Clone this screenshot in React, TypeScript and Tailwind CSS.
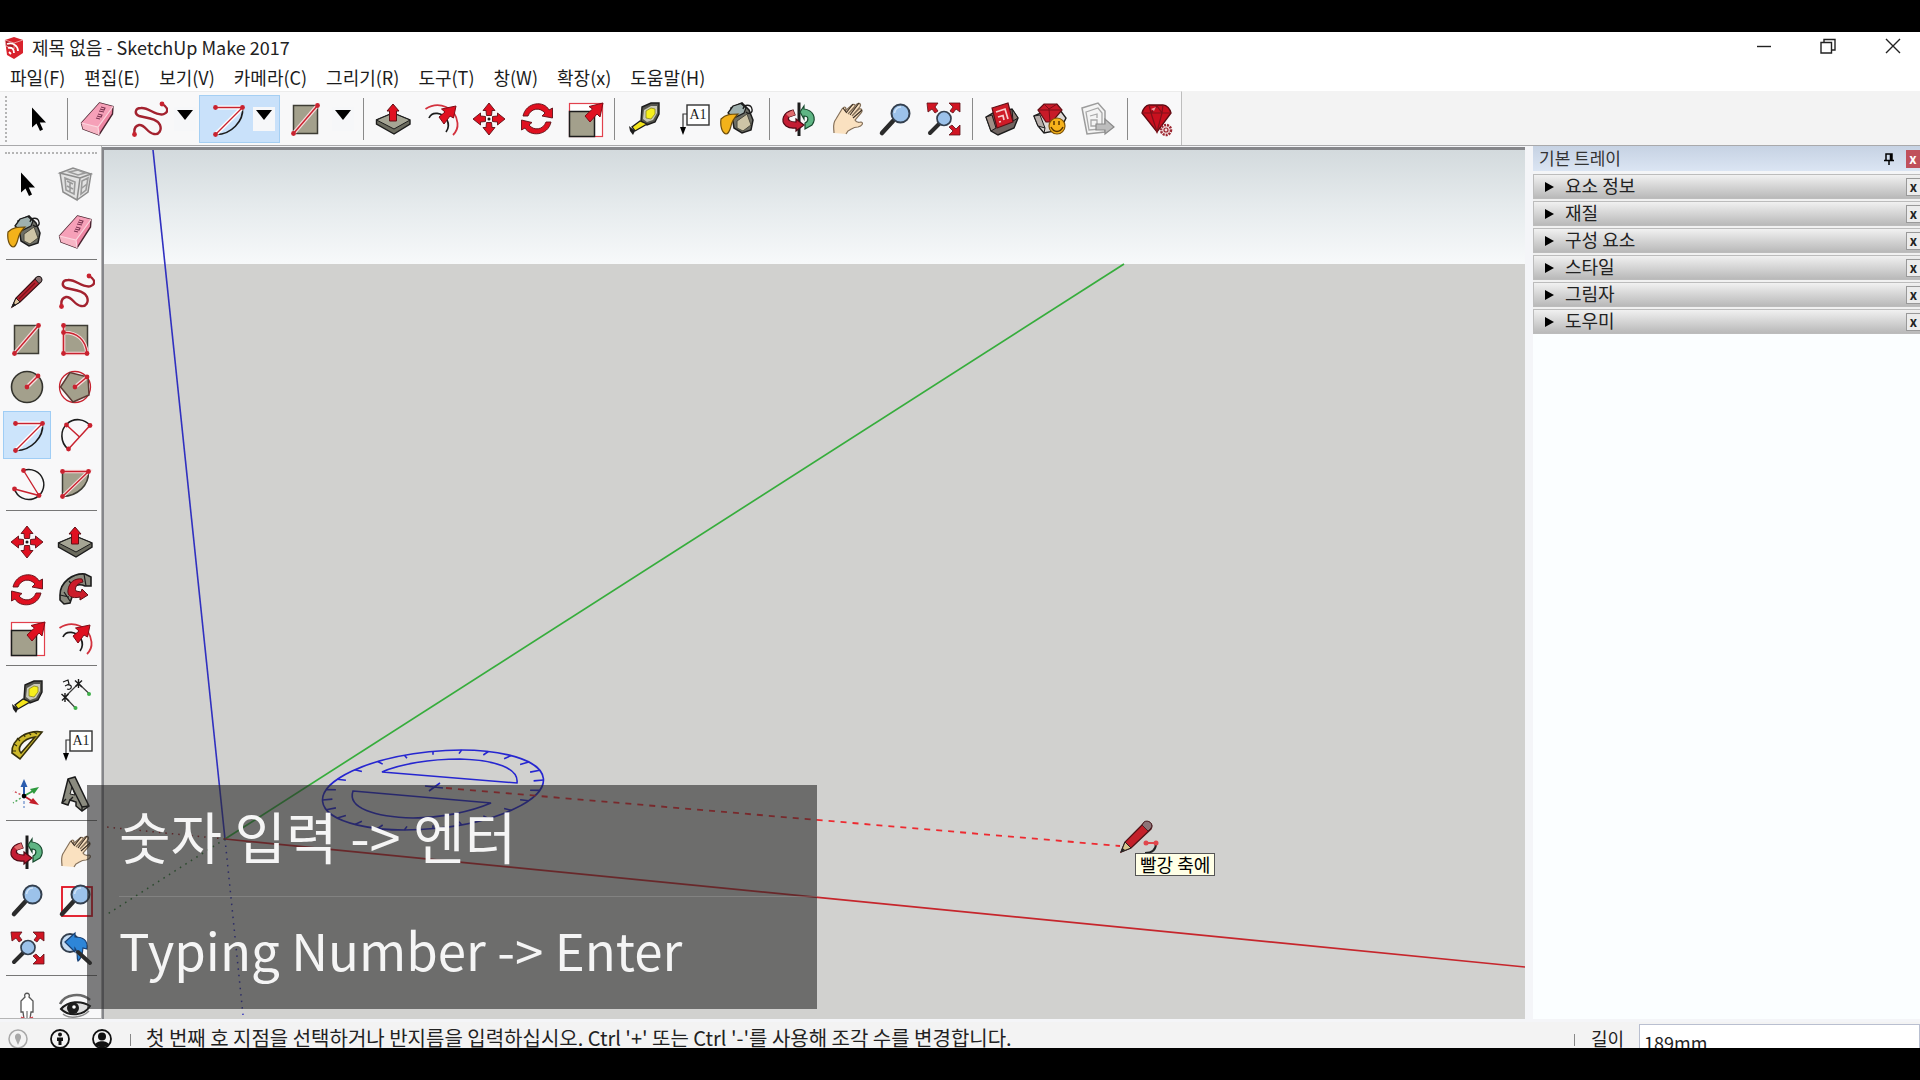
/**
 * SketchUp window: menu, large tool set, 3D viewport and default tray,
 * with the lesson caption laid over the lower left corner.
 */

import type { ReactNode } from "react";

/* ── Icon base (40 × 40 grid) ─────────────────────────── */
function Icon({ children }: { children: ReactNode }) {
    return (
        <svg viewBox="0 0 40 40" className="h-10 w-10 shrink-0" fill="none" aria-hidden="true">
            {children}
        </svg>
    );
}

const RED = "#e01020";
const ROSE = "#c8222f";
const INK = "#1c1c1c";
const CLAY = "#a3a08c";

function Dots({ at }: { at: [number, number][] }) {
    return (
        <>
            {at.map(([x, y]) => (
                <circle key={`${x}-${y}`} cx={x} cy={y} r="2.4" fill={ROSE} />
            ))}
        </>
    );
}

const SelectIcon = () => (
    <Icon>
        <path d="M14 8.500V28.500L18.500 24.500L22 32L25 30.500L21.800 23.500H28Z" fill="#000" />
    </Icon>
);

const ComponentIcon = () => (
    <Icon>
        <path d="M5 9L18 4L36 10L25 14ZM5 9L8 28L22 36L25 14ZM25 14L36 10L33 28L22 36" fill="#e2e2e2" stroke="#8d8d8d" strokeWidth="1.500" />
        <path d="M10 14L20 18L19 30L11 26ZM12 17l6 3M12 22l6 3M15 18v10M27 17l6-3l-2 12l-5 4zM27 24l5-4M14 8l9-2l7 3l-7 2z" stroke="#9b9b9b" strokeWidth="1.600" />
    </Icon>
);

const PaintIcon = () => (
    <Icon>
        <path d="M11 9L22 4L29 11L33 21L31 31L22 34L14 29Z" fill="#6d6e66" stroke={INK} strokeWidth="1.500" />
        <path d="M17 22L27 15L31 26L23 32L17 29Z" fill="#cdc4a6" stroke="#4a483c" />
        <path d="M8 14L13 7L21 4.500L26 9L24 14L14 19Z" fill="#9fb0ae" stroke={INK} strokeWidth="1.300" />
        <path d="M23 10C24 5 31 5 32 10C33 14 29 16 26 13" stroke={INK} strokeWidth="1.300" />
        <path d="M1 20C6 15 11 15 18 15C14 19 12 22 11 27C10 31 8 35 6 35C2 34 0 27 1 20Z" fill="#f3b21a" stroke="#6d4d0c" strokeWidth="1.200" />
    </Icon>
);

const EraserIcon = () => (
    <Icon>
        <path d="M22.500 4L36 7.500L35.500 15L22 36L6 30L4.500 24Z" fill="#ee86a3" stroke="#4a2430" strokeWidth="1.400" />
        <path d="M4.500 24L21 28L36 7.500L22.500 4Z" fill="#f6a0b8" />
        <path d="M4.500 24L21 28L22 36L6 30Z" fill="#f7b6c5" />
        <path d="M4.500 24L21 28L36 7.500M21 28L22 36" stroke="#fbd5de" strokeWidth="1.200" />
        <path d="M24 8l4 1l-1 2l-4-1M22 12l5 1M21 15l4 1l-1 2l-4-1M19 19l4 1" stroke="#7a3350" strokeWidth="1.100" />
    </Icon>
);

const PencilIcon = () => (
    <Icon>
        <path d="M5 36L9 27L29 7C32 4 36 7 34 11L13 31Z" fill="#b7232f" stroke="#3c1216" strokeWidth="1.200" />
        <path d="M5 36L9 27L13 31Z" fill="#e2c7a0" stroke={INK} strokeWidth="1" />
        <path d="M5 36L6.500 31.500L9 34Z" fill={INK} />
        <path d="M28 8L32 12.500L34.500 10.500C36 7 33 4 29.500 6Z" fill="#8a7070" stroke={INK} />
        <path d="M12 28L28 12" stroke="#7c0f1a" strokeWidth="1.300" />
    </Icon>
);

const FreehandIcon = () => (
    <Icon>
        <path
            d="M34 5C40 8 41 13 36 15C28 18 21 8 13 9C7 9 6 15 11 17C18 19 29 19 32 26C34 31 31 36 26 35C19 34 17 25 11 26C6 27 6 31 6.500 35"
            stroke="#a3222f"
            strokeWidth="2.400"
        />
        <Dots at={[[34, 5], [6.5, 35.5]]} />
    </Icon>
);

const RectIcon = () => (
    <Icon>
        <rect x="7.500" y="6.500" width="24" height="28" fill={CLAY} stroke="#3d3c34" strokeWidth="1.500" />
        <path d="M7.500 34.500L31.500 6.500" stroke="#f7dcdc" strokeWidth="4" />
        <path d="M7.500 34.500L31.500 6.500" stroke={ROSE} strokeWidth="1.500" />
        <Dots at={[[7.5, 34.5], [31.5, 6.5]]} />
    </Icon>
);

const RotatedRectIcon = () => (
    <Icon>
        <rect x="8.500" y="6.500" width="24" height="28" fill={CLAY} stroke="#3d3c34" strokeWidth="1.500" />
        <path d="M8.500 13.500C22 13 31 21 32 34.500H8.500V6.500" stroke="#f7dcdc" strokeWidth="3.600" />
        <path d="M8.500 13.500C22 13 31 21 32 34.500H8.500V6.500" stroke={ROSE} strokeWidth="1.500" />
        <Dots at={[[8.5, 6.5], [8.5, 13.5], [8.5, 34.5], [32, 34.5]]} />
    </Icon>
);

const CircleIcon = () => (
    <Icon>
        <circle cx="20" cy="20" r="15.500" fill={CLAY} stroke="#33332d" strokeWidth="1.600" />
        <path d="M20 20L31 9" stroke="#f7dcdc" strokeWidth="4" />
        <path d="M20 20L31 9" stroke={ROSE} strokeWidth="1.500" />
        <Dots at={[[20, 20], [31, 9]]} />
    </Icon>
);

const PolygonIcon = () => (
    <Icon>
        <circle cx="20" cy="20" r="15.500" stroke={ROSE} strokeWidth="1.300" />
        <path d="M33 10L34 28L18 35L5.500 20L15 5.500Z" fill={CLAY} stroke="#5b3a34" strokeWidth="1.500" />
        <path d="M20 20L32 10" stroke="#f7dcdc" strokeWidth="4" />
        <path d="M20 20L32 10" stroke={ROSE} strokeWidth="1.500" />
        <Dots at={[[20, 20], [32, 10]]} />
    </Icon>
);

const ArcIcon = () => (
    <Icon>
        <path d="M35.500 8.500C37 22 24 36 8.500 35.500" stroke={INK} strokeWidth="1.600" />
        <path d="M8.500 8.500H35.500L8.500 35.500" stroke="#fff" strokeWidth="4" strokeLinejoin="round" />
        <path d="M8.500 8.500H35.500L8.500 35.500" stroke={ROSE} strokeWidth="1.400" />
        <Dots at={[[8.5, 8.5], [35.5, 8.5], [8.5, 35.5]]} />
    </Icon>
);

const CenterArcIcon = () => (
    <Icon>
        <path d="M35 10.500C30 4 19 2 12 9C5 15 5 27 13 34" stroke={INK} strokeWidth="1.600" />
        <path d="M11.500 10L24 21.500M35 10.500L13.500 34" stroke={ROSE} strokeWidth="1.500" />
        <Dots at={[[11.5, 10], [35, 10.5], [13.5, 34]]} />
    </Icon>
);

const ThreePointArcIcon = () => (
    <Icon>
        <path d="M16.500 7.500A15 15 0 1 1 7.500 26" stroke={INK} strokeWidth="1.500" />
        <path d="M16.500 7.500L32 32.500L7.500 26" stroke={ROSE} strokeWidth="1.400" />
        <Dots at={[[16.5, 7.5], [32, 32.5], [7.5, 26]]} />
    </Icon>
);

const PieIcon = () => (
    <Icon>
        <path d="M7.500 8.500H33.500C34 22 23 33 7.500 33.500Z" fill={CLAY} stroke="#3d3c34" strokeWidth="1.500" />
        <path d="M7.500 8.500H33.500L7.500 33.500" stroke="#f7dcdc" strokeWidth="3.600" />
        <path d="M7.500 8.500H33.500L7.500 33.500" stroke={ROSE} strokeWidth="1.400" />
        <Dots at={[[7.5, 8.5], [33.5, 8.5], [7.5, 33.5]]} />
    </Icon>
);

const MoveIcon = () => (
    <Icon>
        <g fill={RED} stroke="#5e1016" strokeWidth="0.900">
            {[0, 90, 180, 270].map((turn) => (
                <path key={turn} transform={`rotate(${turn} 20 20)`} d="M20 4L26 11.500H23L22.500 16.500H17.500L17 11.500H14Z" />
            ))}
        </g>
        <circle cx="20" cy="20" r="1.500" fill={INK} />
    </Icon>
);

const PushPullIcon = () => (
    <Icon>
        <path d="M3.500 21L20 14L37 21V25L21 35L3.500 25Z" fill="#6b6b5e" stroke={INK} strokeWidth="1.400" />
        <path d="M3.500 21L20 14L37 21L21 30Z" fill="#a5a594" stroke={INK} strokeWidth="1" />
        <path d="M20 5L26 12H23.500V22H16.500V12H14Z" fill={RED} stroke="#5e1016" strokeWidth="1" />
    </Icon>
);

const RotateIcon = () => (
    <Icon>
        <path d="M6 17C9 3 27 1 32 11L35.500 9V19L25 17L28 14C23 8 14 9 11 17Z" fill={RED} stroke="#5e1016" strokeWidth="0.900" />
        <path d="M34 23C31 37 13 38 8 29L4.500 31V21L15 23.500L12 26C17 32 26 31 29 23Z" fill={RED} stroke="#5e1016" strokeWidth="0.900" />
    </Icon>
);

const FollowMeIcon = () => (
    <Icon>
        <path d="M5 25C5 12 18 3 30 4L36 7V16L30 16C21 12 14 19 17 27L15 33L9 34L5 30Z" fill="#8b8b7f" stroke={INK} strokeWidth="1.600" />
        <path d="M9 22L15 31M5 25L14 27M29 4L31 16M14 11L19 17" stroke={INK} strokeWidth="1.200" />
        <path d="M13 20C14 12 20 8 27 9L28 12C23 13 19 17 21 21L26 22L27 19L33 25L25 30L25 27C17 29 12 26 13 20Z" fill="#cb1c2a" stroke="#5e1016" strokeWidth="1" />
    </Icon>
);

const ScaleIcon = () => (
    <Icon>
        <rect x="4.500" y="4.500" width="33" height="33" fill="#fff" stroke="#e2414d" strokeWidth="1.200" />
        <rect x="4.500" y="12.500" width="25" height="25" fill={CLAY} stroke={INK} strokeWidth="1.500" />
        <path d="M38 4L35 18L32 15L25 23L20 17L27.500 10L24 7.500Z" fill={RED} stroke="#7d0c16" strokeWidth="1" />
    </Icon>
);

const OffsetIcon = () => (
    <Icon>
        <path d="M4.500 10C18 1 35 9 36.500 24C37 29 35 33 32 36" stroke="#d3323e" strokeWidth="1.800" />
        <path d="M8 19C11 12 21 13 26 21C28 25 28 29 25 33" stroke={INK} strokeWidth="1.700" />
        <path d="M35 7L32.500 19L29 17L23 25L18 18L24 13L20.500 10Z" fill={RED} stroke="#7d0c16" strokeWidth="1" />
    </Icon>
);

const TapeIcon = () => (
    <Icon>
        <path d="M18 8L27 4H35V15L31 23L23 26L17 22Z" fill="#55554e" stroke={INK} strokeWidth="1.400" />
        <path d="M20 11L27 7H33V14L29 21L23 23L19 20Z" fill="#c9c8b8" />
        <path d="M22 12L27 9L31 10V15L27 20L22 19Z" fill="#f7f01c" stroke="#8a8620" strokeWidth="0.800" />
        <path d="M16 22L23 25L11 32L8 28Z" fill="#f3e41c" stroke={INK} strokeWidth="1.300" />
        <path d="M5 27L11 32L9 36L6 32Z" fill={INK} />
    </Icon>
);

const DimensionIcon = () => (
    <Icon>
        <path d="M10 20L23.500 6.500M10 20L20 30.500M23.500 6.500L34 16.500" stroke="#3c3c3c" strokeWidth="1.200" />
        <path d="M6.500 17L14 24M7 23.500L13.500 17M20 3.500L27 10M20.500 9.500L27 3.500M10 16v9M23.500 2v9" stroke={INK} strokeWidth="1.400" />
        <path d="M8 5l5-2l1 4l-4 2M13 8c5-1 4 6-1 4" stroke={INK} strokeWidth="1.200" />
        <circle cx="20.500" cy="31" r="2" fill="#3fb04a" />
        <circle cx="34" cy="17" r="2" fill="#3fb04a" />
    </Icon>
);

const ProtractorIcon = () => (
    <Icon>
        <path d="M35 7C22 5 4 13 5 28L13 34Z M28 12L14 28C10 24 14 14 28 12Z" fillRule="evenodd" fill="#cdb92b" stroke="#37310c" strokeWidth="1.600" />
        <path d="M30 9L27 7M24 10L22 8M18 12L17 9M13 16L10 13M10 21L7 19M9 26H5" stroke="#37310c" strokeWidth="1.200" />
    </Icon>
);

const TextIcon = () => (
    <Icon>
        <rect x="15" y="6" width="22" height="20" fill="#fff" stroke="#333" strokeWidth="1.400" />
        <path d="M15 15H11V28" stroke="#333" strokeWidth="1.200" />
        <path d="M8 28H14L11 36Z" fill="#000" />
        <text x="26" y="20" textAnchor="middle" fontSize="14" fill={INK} className="font-['Liberation_Serif',serif]">
            A1
        </text>
    </Icon>
);

const AxesIcon = () => (
    <Icon>
        <path d="M17 23L6 18" stroke="#d04550" strokeWidth="1.400" strokeDasharray="2 2" />
        <path d="M17 23L6 30" stroke="#4ba656" strokeWidth="1.400" strokeDasharray="2 2" />
        <path d="M17 23V35" stroke="#7b9bd1" strokeWidth="1.400" strokeDasharray="3 2" />
        <path d="M17 23V11" stroke="#2b5cae" strokeWidth="2" />
        <path d="M17 23L26 18" stroke="#2e9a3e" strokeWidth="1.800" />
        <path d="M17 23L25 28" stroke="#c41e2a" strokeWidth="1.800" />
        <path d="M17 6L20.500 14H13.500Z" fill="#2b5cae" />
        <path d="M32 14L27 21L23 16Z" fill="#2e9a3e" />
        <path d="M32 32L22 30L26 25Z" fill="#c41e2a" />
        <circle cx="17" cy="23" r="2.300" fill="#000" />
    </Icon>
);

const Text3dIcon = () => (
    <Icon>
        <path d="M13 6L20 4L34 33L27 38L21 33L21 29L15 27L13 32L7 30Z" fill="#8b8b7f" stroke={INK} strokeWidth="1.500" />
        <path d="M17 14L20 22L15 21Z" fill="#f0f0ee" stroke={INK} />
        <path d="M13 6L27 34V38M7 30L11 26M27 34L34 33M15 27L18 24" stroke={INK} strokeWidth="1.400" />
    </Icon>
);

const OrbitIcon = () => (
    <Icon>
        <path d="M20 3.500V37" stroke={INK} strokeWidth="3" />
        <path d="M21 13L25 7V10C34 11 38 19 33 26L26 30V24C30 22 30 17 25 17V20Z" fill="#5fb584" stroke="#17492d" strokeWidth="1.200" />
        <path d="M14 11C4 13 1 22 7 27C11 30 15 29 17 29V32L25 26L17 20V23C11 23 8 21 10 18L16 16Z" fill="#c31c33" stroke="#4d0914" strokeWidth="1.200" />
        <path d="M14 11L16 16L10 18L7 15Z" fill="#e06c6e" />
    </Icon>
);

const HandIcon = () => (
    <Icon>
        <path d="M7 34C7 29 5 25 9 20L15 10C18 6 20 9 18 12L25 6C28 4 29 7 27 9L21 15L30 5C33 3 35 6 32 9L25 17L32 10C35 9 36 12 34 14L28 21C29 23 31 24 34 23C37 24 35 27 31 28C26 28 25 30 21 32L19 35" fill="#fae1c0" stroke="#85715b" strokeWidth="1.200" />
        <path d="M16 9L19 13M26 5L19 14M32 4L23 16M35 11L26 19" stroke="#3b2f25" strokeWidth="1.200" />
    </Icon>
);

const Lens = ({ window = false }: { window?: boolean }) => (
    <Icon>
        {window && <rect x="7" y="7" width="30" height="29" stroke={RED} strokeWidth="1.800" />}
        <path d="M18 22L7 34" stroke="#2b2b2b" strokeWidth="4.500" strokeLinecap="round" />
        <circle cx="25.500" cy="14.500" r="9" fill="#9cc2ea" stroke="#34404f" strokeWidth="2" />
        <path d="M19.500 14C20 10 23 8 26 8" stroke="#d3e5f8" strokeWidth="1.600" />
    </Icon>
);

const ExtentsIcon = () => (
    <Icon>
        <path d="M17 24L7 34" stroke="#2b2b2b" strokeWidth="4" strokeLinecap="round" />
        <circle cx="21" cy="19.500" r="7" fill="#9cc2ea" stroke="#34404f" strokeWidth="1.700" />
        <g fill="#d11523" stroke="#5e1016" strokeWidth="0.800">
            <path d="M4 4L15 4L12 8L15 12L12 14L9 10L5 13Z" />
            <path d="M37 4L26 4L30 8L27 12L30 14L33 10L37 13Z" />
            <path d="M37 36L26 36L30 32L26 28L29 26L33 30L37 26Z" />
        </g>
    </Icon>
);

const PreviousIcon = () => (
    <Icon>
        <circle cx="15" cy="15" r="9" fill="#c6dcf2" stroke="#34404f" strokeWidth="2" />
        <path d="M10 14L20 5V9C28 9 33 12 32 21L28 20C27 25 28 29 23 33C21 29 24 25 20 20V24Z" fill="#2e86d8" stroke="#173f73" strokeWidth="1.200" />
        <path d="M23 24L35 35" stroke="#2b2b2b" strokeWidth="4" strokeLinecap="round" />
    </Icon>
);

const PersonIcon = () => (
    <Icon>
        <path d="M18 10C16 5 24 5 22 10L26 14L26 25H24L23 32H17L16 25H14V14Z" fill="#fff" stroke="#555" strokeWidth="1.300" />
        <path d="M20 24V32" stroke="#555" />
        <path d="M14 30l3 2M17 30l-3 2M23 30l3 2M26 30l-3 2" stroke="#d04550" strokeWidth="1.200" />
    </Icon>
);

const EyeIcon = () => (
    <Icon>
        <path d="M5 17C10 7 26 5 35 13" stroke="#6a6a6a" strokeWidth="2.600" />
        <path d="M6 22C13 14 26 13 35 19C29 29 14 30 6 22Z" fill="#dedede" stroke={INK} strokeWidth="2" />
        <circle cx="18" cy="21" r="6" fill={INK} />
        <circle cx="19" cy="20" r="1.800" fill="#fff" />
        <path d="M8 27C14 32 27 31 34 24" stroke="#8b8b8b" strokeWidth="1.500" />
    </Icon>
);

const WarehouseIcon = () => (
    <Icon>
        <path d="M4 18L11 14L30 10L36 19L32 29L16 36L9 32Z" fill="#6f6460" stroke={INK} strokeWidth="1.400" />
        <path d="M4 18L10 16L14 29L9 32Z" fill="#a08e86" stroke={INK} />
        <path d="M30 10L36 19L31 22Z" fill="#8d7b74" stroke={INK} />
        <path d="M10 9L26 4L31 23L15 29Z" fill="#cf1b27" stroke="#5e1016" strokeWidth="1.200" />
        <path d="M14 13L23 10L26 20M16 18L21 16.500L22 21M17 23L19 22.500" stroke="#f7d0d0" strokeWidth="1.700" />
    </Icon>
);

const ExtensionIcon = () => (
    <Icon>
        <path d="M4 17L11 14L30 11L36 19L30 31L14 34L8 27Z" fill="#ddd8d5" stroke={INK} strokeWidth="1.400" />
        <path d="M4 17L10 16L15 29L8 27ZM15 29L14 34" fill="#b7aeaa" stroke={INK} />
        <path d="M8 11L14 5H27L32 11L22 23H16Z" fill="#c81a28" stroke="#5e1016" strokeWidth="1.200" />
        <path d="M8 11H32M14 5L19 10L27 5M19 10L20 23" stroke="#7d0c16" />
        <circle cx="27" cy="27" r="8" fill="#f6b21b" stroke="#7b5106" strokeWidth="1.200" />
        <path d="M24 22v4M29 22v4M21 28C24 34 30 34 33 28" stroke="#5a3600" strokeWidth="1.500" />
    </Icon>
);

const LayoutIcon = () => (
    <Icon>
        <path d="M4 9L20 4L27 12V33L9 35Z" fill="#f4f4f4" stroke="#9c9c9c" strokeWidth="1.500" />
        <path d="M8 13L20 9L24 14V30L11 31ZM12 17L19 15V19M13 21h6v6h-6z" stroke="#a8a8a8" strokeWidth="1.300" />
        <path d="M18 25H27V20L36 28L27 35V31H18Z" fill="#bdbdbd" stroke="#8a8a8a" strokeWidth="1.200" />
    </Icon>
);

const RubyIcon = () => (
    <Icon>
        <path d="M5 14C6 10 9 6 12 6H26C30 6 33 10 34 14L20 33Z" fill="#c9101f" stroke="#5e0a12" strokeWidth="1.300" />
        <path d="M5 14H34M12 6L14 14L20 33L25 14L26 6M14 14L20 7L25 14" stroke="#81101a" strokeWidth="1.200" />
        <path d="M14 10L19 8L17 12Z" fill="#f19aa0" />
        <circle cx="29" cy="31" r="5" fill="#f2dede" stroke="#9c2631" strokeWidth="2.500" strokeDasharray="2 1" />
        <circle cx="29" cy="31" r="2" stroke="#9c2631" strokeWidth="1.200" />
    </Icon>
);

/* ── Tool lists ───────────────────────────────────────── */
interface Tool {
    name: string;
    icon: () => ReactNode;
}

const ZoomIcon = () => <Lens />;
const ZoomWindowIcon = () => <Lens window />;

const topGroups: Tool[][] = [
    [
        { name: "밀기/끌기", icon: PushPullIcon },
        { name: "오프셋", icon: OffsetIcon },
        { name: "이동", icon: MoveIcon },
        { name: "회전", icon: RotateIcon },
        { name: "배율", icon: ScaleIcon },
    ],
    [
        { name: "줄자", icon: TapeIcon },
        { name: "텍스트", icon: TextIcon },
        { name: "페인트", icon: PaintIcon },
    ],
    [
        { name: "궤도", icon: OrbitIcon },
        { name: "이동 보기", icon: HandIcon },
        { name: "확대/축소", icon: ZoomIcon },
        { name: "범위 확대", icon: ExtentsIcon },
    ],
    [
        { name: "3D 웨어하우스", icon: WarehouseIcon },
        { name: "확장 웨어하우스", icon: ExtensionIcon },
        { name: "레이아웃", icon: LayoutIcon },
    ],
    [{ name: "확장 관리자", icon: RubyIcon }],
];

const sideGroups: Tool[][] = [
    [
        { name: "선택", icon: SelectIcon },
        { name: "구성 요소 만들기", icon: ComponentIcon },
        { name: "페인트", icon: PaintIcon },
        { name: "지우개", icon: EraserIcon },
    ],
    [
        { name: "선", icon: PencilIcon },
        { name: "자유곡선", icon: FreehandIcon },
        { name: "직사각형", icon: RectIcon },
        { name: "회전된 직사각형", icon: RotatedRectIcon },
        { name: "원", icon: CircleIcon },
        { name: "다각형", icon: PolygonIcon },
        { name: "2점 호", icon: ArcIcon },
        { name: "호", icon: CenterArcIcon },
        { name: "3점 호", icon: ThreePointArcIcon },
        { name: "파이", icon: PieIcon },
    ],
    [
        { name: "이동", icon: MoveIcon },
        { name: "밀기/끌기", icon: PushPullIcon },
        { name: "회전", icon: RotateIcon },
        { name: "따라가기", icon: FollowMeIcon },
        { name: "배율", icon: ScaleIcon },
        { name: "오프셋", icon: OffsetIcon },
    ],
    [
        { name: "줄자", icon: TapeIcon },
        { name: "치수", icon: DimensionIcon },
        { name: "각도기", icon: ProtractorIcon },
        { name: "텍스트", icon: TextIcon },
        { name: "축", icon: AxesIcon },
        { name: "3D 텍스트", icon: Text3dIcon },
    ],
    [
        { name: "궤도", icon: OrbitIcon },
        { name: "이동 보기", icon: HandIcon },
        { name: "확대/축소", icon: ZoomIcon },
        { name: "창 확대", icon: ZoomWindowIcon },
        { name: "범위 확대", icon: ExtentsIcon },
        { name: "이전", icon: PreviousIcon },
    ],
    [
        { name: "카메라 배치", icon: PersonIcon },
        { name: "둘러보기", icon: EyeIcon },
    ],
];

const menus = ["파일(F)", "편집(E)", "보기(V)", "카메라(C)", "그리기(R)", "도구(T)", "창(W)", "확장(x)", "도움말(H)"];
const panels = ["요소 정보", "재질", "구성 요소", "스타일", "그림자", "도우미"];

function ToolButton({ tool, active = false }: { tool: Tool; active?: boolean }) {
    const Glyph = tool.icon;
    return (
        <button
            type="button"
            aria-label={tool.name}
            className={`flex h-12 w-12 shrink-0 items-center justify-center ${active ? "border border-[#9fcdf5] bg-[#cce4fb]" : ""}`}
        >
            <Glyph />
        </button>
    );
}

function SplitButton({ tool, active = false }: { tool: Tool; active?: boolean }) {
    const Glyph = tool.icon;
    return (
        <div className={`flex h-[46px] w-[79px] shrink-0 items-center pr-1 ${active ? "bg-[#c9e1fa] outline outline-[#a5cff3]" : ""}`}>
            <button type="button" aria-label={tool.name} className="flex flex-1 items-center justify-center">
                <Glyph />
            </button>
            <button type="button" aria-label={`${tool.name} 더 보기`} className="flex h-6 w-[22px] items-start justify-center bg-[#f6f7f9] pt-[3px]">
                <svg viewBox="0 0 16 10" className="h-[10px] w-4" aria-hidden="true">
                    <path d="M0 0H16L8 10Z" fill="#000" />
                </svg>
            </button>
        </div>
    );
}

const BarRule = () => <div className="mr-[5px] ml-[5px] h-[42px] w-px shrink-0 bg-[#8a8a8a]" />;

/* ── Top bars ─────────────────────────────────────────── */
function TitleBar() {
    return (
        <div className="flex h-8 items-center bg-white pl-1">
            <svg viewBox="0 0 20 22" className="h-[22px] w-5" aria-hidden="true">
                <path d="M1 3L10 0L19 3V16L10 22L3 18Z" fill="#d9222c" />
                <path d="M1 3L10 6V12L2 9ZM10 6L19 3" fill="#b3141e" stroke="#f4c6c8" strokeWidth="0.700" />
                <path d="M3 7C9 5 14 9 14 14M4 11C8 10 10 12 10 16M5 15L7 17" fill="none" stroke="#fff" strokeWidth="1.800" />
            </svg>
            <h1 className="ml-2 flex-1 pb-[2px] text-[18px] leading-7">제목 없음 - SketchUp Make 2017</h1>
            <div className="flex h-full items-start">
                <button type="button" aria-label="최소화" className="flex h-7 w-16 items-center justify-center">
                    <svg viewBox="0 0 16 16" className="h-4 w-4" stroke="#222" strokeWidth="1.400"><path d="M1 8.500H15" /></svg>
                </button>
                <button type="button" aria-label="이전 크기로" className="flex h-7 w-16 items-center justify-center">
                    <svg viewBox="0 0 16 16" className="h-4 w-4" fill="none" stroke="#222" strokeWidth="1.400"><path d="M1 4.500H11.500V15H1ZM4 4V1.500H15V12H12" /></svg>
                </button>
                <button type="button" aria-label="닫기" className="ml-[6px] flex h-7 w-[54px] items-center justify-center">
                    <svg viewBox="0 0 16 16" className="h-4 w-4" stroke="#222" strokeWidth="1.400"><path d="M1 1L15 15M15 1L1 15" /></svg>
                </button>
            </div>
        </div>
    );
}

function MenuBar() {
    return (
        <nav className="flex h-[27px] items-center gap-[19px] bg-white pb-[2px] pl-[10px]">
            {menus.map((label) => (
                <button key={label} type="button" className="text-[18px] leading-6 whitespace-nowrap text-[#1c1c1c]">
                    {label}
                </button>
            ))}
        </nav>
    );
}

function TopToolbar() {
    return (
        <div className="flex h-[55px] border-b border-[#a9a9ab] bg-[#f3f3f3]">
            <div className="flex items-center border-t border-r border-t-[#ececec] border-r-[#bdbdbd] bg-[#f8f8f9] pl-[5px]">
                <div className="mr-[7px] h-[46px] border-l-2 border-dotted border-[#b5b5b5]" />
                <ToolButton tool={{ name: "선택", icon: SelectIcon }} />
                <BarRule />
                <ToolButton tool={{ name: "지우개", icon: EraserIcon }} />
                <SplitButton tool={{ name: "자유곡선", icon: FreehandIcon }} />
                <SplitButton tool={{ name: "2점 호", icon: ArcIcon }} active />
                <SplitButton tool={{ name: "직사각형", icon: RectIcon }} />
                {topGroups.map((group, i) => (
                    <div key={i} className="flex items-center">
                        <BarRule />
                        {group.map((tool) => (
                            <ToolButton key={tool.name} tool={tool} />
                        ))}
                    </div>
                ))}
            </div>
        </div>
    );
}

function SideToolbar() {
    return (
        <aside className="w-[102px] shrink-0 overflow-hidden border-r border-b border-[#b5b5b5] bg-[#f8f8f9] pt-[6px] pl-[3px]">
            <div className="mr-1 mb-[6px] ml-[2px] border-t-2 border-dotted border-[#b5b5b5]" />
            {sideGroups.map((group, i) => (
                <div key={i}>
                    {i > 0 && <div className="mt-[3px] mr-1 mb-[7px] ml-[3px] h-px bg-[#777]" />}
                    <div className="grid w-24 grid-cols-2">
                        {group.map((tool) => (
                            <ToolButton key={tool.name} tool={tool} active={tool.name === "2점 호"} />
                        ))}
                    </div>
                </div>
            ))}
        </aside>
    );
}

/* ── Viewport ─────────────────────────────────────────── */
const ticks = Array.from({ length: 24 }, (_, i) => {
    const t = (i * Math.PI) / 12;
    const dx = 110.5 * Math.cos(t);
    const dy = -10 * Math.cos(t) - 38.7 * Math.sin(t);
    return `M${(433 + dx).toFixed(1)} ${(790 + dy).toFixed(1)}L${(433 + dx * 0.91).toFixed(1)} ${(790 + dy * 0.91).toFixed(1)}`;
}).join("");

function Viewport() {
    return (
        <main className="relative mt-px min-w-0 flex-1 border-t-[3px] border-l-2 border-[#85868a] bg-[#d1d1cf]">
            <div className="h-[114px] bg-linear-to-b from-[#d3dadd] via-[#e6ebed] to-[#f7f9fa]" />
            <svg viewBox="104 150 1421 869" preserveAspectRatio="xMinYMin slice" className="absolute inset-0 h-full w-full" fill="none" aria-hidden="true">
                <path d="M153 150L225 839" stroke="#3030c0" strokeWidth="1.600" />
                <path d="M225 839L1124 264" stroke="#36ad3c" strokeWidth="1.700" />
                <path d="M225 839L1525 967" stroke="#c6262c" strokeWidth="1.700" />
                <path d="M225 839L243 1015" stroke="#3030c0" strokeWidth="1.500" strokeDasharray="1.500 5" />
                <path d="M225 839L106 915" stroke="#2f7a34" strokeWidth="1.500" strokeDasharray="1.500 5" />
                <path d="M225 839L106 827" stroke="#a02328" strokeWidth="1.500" strokeDasharray="1.500 5" />
                <g stroke="#2626d0" strokeWidth="1.600">
                    <ellipse cx="433" cy="790" rx="111" ry="38.500" transform="rotate(-5.900 433 790)" />
                    <path d={ticks} />
                    <path d="M382 772L517 783C519 768 495 760 460 759C430 759 400 764 382 772Z" />
                    <path d="M353 791L491 803C470 812 440 818 413 818C375 817 347 808 353 791Z" />
                    <path d="M425 786L443 788M429 791L440 783" />
                </g>
                <path d="M446 788L1120 846" stroke="#ee2a30" strokeWidth="1.800" strokeDasharray="6 6" />
                <path d="M1147 843H1156" stroke="#e0464c" strokeWidth="2" />
                <path d="M1156 843C1156 850 1152 853 1145 853" stroke="#222" strokeWidth="2" />
                <circle cx="1146" cy="843" r="2.500" fill="#e0464c" />
                <circle cx="1156" cy="843" r="2.500" fill="#e0464c" />
                <path d="M1121 852L1125 842L1144 823C1147 819 1154 824 1151 829L1131 848Z" fill="#c4202a" stroke="#4f1216" strokeWidth="1.300" />
                <path d="M1121 852L1125 842L1131 848Z" fill="#d8c68e" stroke="#222" />
                <path d="M1121 852L1122.500 848L1125 850Z" fill="#222" />
                <path d="M1142 825L1148 831L1151 828C1154 824 1148 819 1144 822Z" fill="#8d7478" stroke="#4c2428" />
            </svg>
            <div role="tooltip" className="absolute top-[703px] left-[1031px] border border-[#555] bg-[#ffffe6] px-1 text-[18px] leading-[21px] whitespace-nowrap text-black">
                빨강 축에
            </div>
        </main>
    );
}

/* ── Tray ─────────────────────────────────────────────── */
function Tray() {
    return (
        <aside className="ml-2 flex w-[387px] shrink-0 flex-col bg-[#fbfeff]">
            <div className="flex h-[25px] items-center bg-linear-to-b from-[#c6d2e3] to-[#dbe5f3] pl-[6px]">
                <h2 className="flex-1 pb-[2px] text-[17px] leading-[23px] text-[#333]">기본 트레이</h2>
                <button type="button" aria-label="고정" className="mr-3">
                    <svg viewBox="0 0 10 12" className="h-3 w-[10px]" fill="none" stroke="#000" strokeWidth="1.500">
                        <path d="M2 7V1H8V7M0 7.500H10M5 8V12M6.500 1V7" />
                    </svg>
                </button>
                <button type="button" aria-label="트레이 닫기" className="h-[18px] w-[14px] bg-[#c0505b] text-[13px] leading-[16px] font-bold text-white">
                    x
                </button>
            </div>
            <div className="flex flex-col gap-[2px] border-t-[3px] border-[#f4f5f7] bg-[#f1f1f1]">
                {panels.map((label) => (
                    <div key={label} className="flex h-[25px] items-center border border-r-0 border-[#bcbcbc] bg-linear-to-b from-[#f1f1f1] to-[#b9b9b9] pl-[11px]">
                        <button type="button" className="flex flex-1 items-center gap-[11px] text-left text-[18px] text-[#222]">
                            <svg viewBox="0 0 9 10" className="h-[10px] w-[9px]" aria-hidden="true"><path d="M0 0L9 5L0 10Z" fill="#000" /></svg>
                            <span className="pb-1 leading-5">{label}</span>
                        </button>
                        <button type="button" aria-label={`${label} 닫기`} className="h-[18px] w-[14px] border border-r-0 border-[#999] bg-[#ececec] text-[13px] leading-[16px] font-bold text-[#222]">
                            x
                        </button>
                    </div>
                ))}
            </div>
        </aside>
    );
}

function StatusBar() {
    return (
        <footer className="flex h-[26px] items-start overflow-hidden bg-[#f3f3f3] pl-2 text-[20px] leading-8 text-[#222]">
            <div className="mt-[7px] flex shrink-0 gap-[22px]">
                <svg viewBox="0 0 20 20" className="h-5 w-5" fill="none" aria-hidden="true">
                    <circle cx="10" cy="10" r="9" stroke="#a8a8a8" strokeWidth="1.500" />
                    <path d="M10 16L7 9C6 3 14 3 13 9Z" fill="#a8a8a8" />
                </svg>
                <svg viewBox="0 0 20 20" className="h-5 w-5" fill="none" aria-hidden="true">
                    <circle cx="10" cy="10" r="9" stroke="#111" strokeWidth="1.800" />
                    <circle cx="10" cy="5.500" r="2" fill="#111" />
                    <path d="M7 8.500H13V12H11.500V16H8.500V12H7Z" fill="#111" />
                </svg>
                <svg viewBox="0 0 20 20" className="h-5 w-5" fill="none" aria-hidden="true">
                    <circle cx="10" cy="10" r="9" stroke="#111" strokeWidth="1.800" />
                    <circle cx="10" cy="7.500" r="4" fill="#111" />
                    <path d="M3 16C4 11 16 11 17 16L10 19Z" fill="#111" />
                </svg>
            </div>
            <div className="mt-3 ml-[18px] h-3 w-px bg-[#888]" />
            <p className="ml-[15px] flex-1 whitespace-nowrap">
                첫 번째 호 지점을 선택하거나 반지름을 입력하십시오. Ctrl '+' 또는 Ctrl '-'를 사용해 조각 수를 변경합니다.
            </p>
            <div className="mt-3 mr-4 h-3 w-px bg-[#888]" />
            <label htmlFor="length" className="w-[48px] text-[18px]">
                길이
            </label>
            <input id="length" defaultValue="189mm" className="mt-[2px] h-9 w-[281px] border border-[#b9bfd0] bg-white px-1 text-[18px]" />
        </footer>
    );
}

export default function App() {
    return (
        <div className="relative flex h-screen flex-col overflow-hidden bg-black py-8 font-['Noto_Sans_CJK_KR',sans-serif] text-[#222]">
            <TitleBar />
            <MenuBar />
            <TopToolbar />
            <div className="flex min-h-0 flex-1 bg-[#f4f5f8] pb-[3px]">
                <SideToolbar />
                <Viewport />
                <Tray />
            </div>
            <StatusBar />

            {/* Lesson caption */}
            <div className="absolute bottom-[71px] left-[87px] flex h-56 w-[730px] flex-col bg-[#2a2a2a]/60 pl-8 text-[#f5f5f5]">
                <p className="flex h-28 items-center border-b border-white/15 pb-3 text-[56px] whitespace-nowrap">숫자 입력 -&gt; 엔터</p>
                <p className="flex h-28 items-center pb-2 text-[51px] whitespace-nowrap">Typing Number -&gt; Enter</p>
            </div>
        </div>
    );
}
